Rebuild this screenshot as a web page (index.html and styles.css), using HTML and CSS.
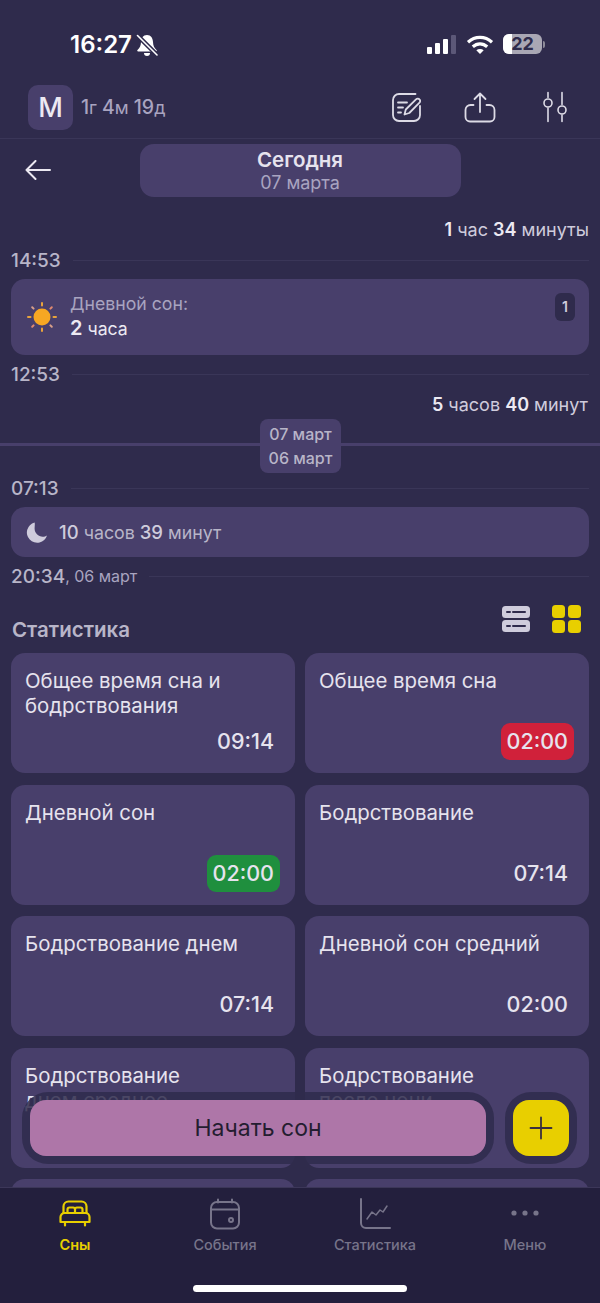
FILE: index.html
```html
<!DOCTYPE html>
<html lang="ru">
<head>
    <meta charset="UTF-8">
    <meta name="viewport" content="width=device-width, initial-scale=1.0">
    <title>Сны</title>
    <link rel="stylesheet" href="styles.css">
</head>
<body>
    <div class="screen">
        <div class="main">
            <div class="status-bar">
                <div class="status-left">
                    <span class="clock">16:27</span>
                    <svg class="bell" width="22" height="23" viewBox="0 0 22 23">
                        <path d="M11 1C7 1 5.300 4 5 8c-.2 3.500-1 5.500-3.500 8-.6.700-.2 1.500.7 1.500h17.600c.9 0 1.300-.8.700-1.500-2.500-2.500-3.300-4.500-3.500-8C16.700 4 15 1 11 1z" fill="#fff"/>
                        <path d="M8 19h6a3 3 0 0 1-6 0z" fill="#fff"/>
                        <path d="M1 1l20 20" stroke="#2f2b4c" stroke-width="4.500"/>
                        <path d="M1.500 1.500l19.500 19.500" stroke="#fff" stroke-width="1.600" stroke-linecap="round"/>
                    </svg>
                </div>
                <div class="status-right">
                    <div class="signal"><i class="s1"></i><i class="s2"></i><i class="s3"></i><i class="s4"></i></div>
                    <svg width="28" height="21" viewBox="0 0 28 21" fill="none" stroke="#fff" stroke-width="3.200">
                        <path d="M2 8.200c7-6.400 17-6.400 24 0"/>
                        <path d="M6.800 12.700c4.300-3.900 10.100-3.900 14.400 0"/>
                        <path d="M14 20l-3.700-3.800c2.200-1.700 5.200-1.700 7.400 0z" fill="#fff" stroke="none"/>
                    </svg>
                    <div class="battery"><span class="battery-fill"></span><span class="battery-num">22</span></div>
                    <span class="battery-cap"></span>
                </div>
            </div>

            <header class="top-bar">
                <div class="avatar">M</div>
                <div class="age"><b>1</b>г <b>4</b>м <b>19</b>д</div>
                <div class="top-icons">
                    <svg width="32" height="32" viewBox="0 0 32 32" fill="none" stroke="#dddbe6" stroke-width="1.800" stroke-linecap="round" stroke-linejoin="round">
                        <path d="M25.500 3H9a6 6 0 0 0-6 6v15a6 6 0 0 0 6 6h15a6 6 0 0 0 6-6v-9"/>
                        <path d="M8 11.500h9M8 16.500h5M8 21.500h3"/>
                        <path d="M14.500 23.500l1.300-5L26 8.300c1-1 2.600-1 3.500 0 .9.900.9 2.400 0 3.300L19.300 22z"/>
                    </svg>
                    <svg width="32" height="32" viewBox="0 0 32 32" fill="none" stroke="#dddbe6" stroke-width="1.800" stroke-linecap="round" stroke-linejoin="round">
                        <path d="M16 21V2.500M10.500 8L16 2.500 21.500 8"/>
                        <path d="M9.500 14H6.500a5 5 0 0 0-5 5v7a4.500 4.500 0 0 0 4.500 4.500h20a4.500 4.500 0 0 0 4.500-4.500v-7a5 5 0 0 0-5-5h-3"/>
                    </svg>
                    <svg width="26" height="32" viewBox="0 0 26 32" fill="none" stroke="#dddbe6" stroke-width="1.600" stroke-linecap="round">
                        <path d="M6 1.500v5M6 17v13.500M20 1.500v12M20 24v6.500"/>
                        <circle cx="6" cy="12" r="4"/>
                        <circle cx="20" cy="19" r="4"/>
                    </svg>
                </div>
            </header>

            <div class="date-nav">
                <svg class="back" width="26" height="20" viewBox="0 0 26 20" fill="none" stroke="#ece9f2" stroke-width="2" stroke-linecap="round" stroke-linejoin="round">
                    <path d="M25 10H1.500M10.500 1L1.500 10l9 9"/>
                </svg>
                <div class="date-pill">
                    <div class="date-title">Сегодня</div>
                    <div class="date-sub">07 марта</div>
                </div>
            </div>

            <div class="timeline">
                <div class="gap-label"><b>1</b> час <b>34</b> минуты</div>
                <div class="time-row first"><span class="time">14:53</span><span class="time-line"></span></div>
                <div class="day-card">
                    <svg width="32" height="32" viewBox="0 0 32 32">
                        <g fill="none" stroke-width="2" stroke-linecap="round">
                            <path d="M16 2v2.500M16 27.500V30" stroke="#e8a33d"/>
                            <path d="M2 16h2.500M27.500 16H30" stroke="#e8a33d"/>
                            <path d="M6.200 6.200l1.400 1.400M24.400 24.400l1.400 1.400" stroke="#d9a08a"/>
                            <path d="M6.200 25.800l1.400-1.400M24.400 7.600l1.400-1.400" stroke="#e08a70"/>
                        </g>
                        <circle cx="16" cy="16" r="8.500" fill="#f6a723"/>
                    </svg>
                    <div class="day-text">
                        <div class="day-title">Дневной сон:</div>
                        <div class="day-value"><b>2</b> часа</div>
                    </div>
                    <span class="count">1</span>
                </div>
                <div class="time-row"><span class="time">12:53</span><span class="time-line"></span></div>
                <div class="gap-label second"><b>5</b> часов <b>40</b> минут</div>

                <div class="day-split">
                    <div class="split-line"></div>
                    <div class="split-chip"><span>07 март</span><span>06 март</span></div>
                </div>

                <div class="time-row night-top"><span class="time">07:13</span><span class="time-line"></span></div>
                <div class="night-card">
                    <svg width="24" height="24" viewBox="0 0 24 24">
                        <path d="M9.500 2.500A10.300 10.300 0 1 0 22 15.500c-1.200.9-2.700 1.300-4.200 1.300-4.500 0-8.200-3.700-8.200-8.200 0-2.300.5-4.300 0-6.100z" fill="#cfccdc"/>
                    </svg>
                    <div class="night-text"><b>10</b> часов <b>39</b> минут</div>
                </div>
                <div class="time-row"><span class="time">20:34</span><span class="time-date">, 06 март</span><span class="time-line"></span></div>
            </div>

            <div class="stats-head">
                <h2>Статистика</h2>
                <div class="view-icons">
                    <svg width="30" height="28" viewBox="0 0 30 28">
                        <rect x="1" y="1" width="28" height="12" rx="3.500" fill="#cfccdc"/>
                        <rect x="1" y="15" width="28" height="12" rx="3.500" fill="#cfccdc"/>
                        <path d="M6 7h3M12 7h12M6 21h3M12 21h12" stroke="#2f2b4c" stroke-width="2" stroke-linecap="round"/>
                    </svg>
                    <svg width="29" height="28" viewBox="0 0 29 28" fill="#e8cf00">
                        <rect x="0" y="0" width="13" height="13" rx="3.500"/>
                        <rect x="16" y="0" width="13" height="13" rx="3.500"/>
                        <rect x="0" y="15" width="13" height="13" rx="3.500"/>
                        <rect x="16" y="15" width="13" height="13" rx="3.500"/>
                    </svg>
                </div>
            </div>

            <div class="stats-grid">
                <div class="stat"><div class="stat-name">Общее время сна и бодрствования</div><div class="stat-value">09:14</div></div>
                <div class="stat"><div class="stat-name">Общее время сна</div><div class="stat-value bad">02:00</div></div>
                <div class="stat"><div class="stat-name">Дневной сон</div><div class="stat-value good">02:00</div></div>
                <div class="stat"><div class="stat-name">Бодрствование</div><div class="stat-value">07:14</div></div>
                <div class="stat"><div class="stat-name">Бодрствование днем</div><div class="stat-value">07:14</div></div>
                <div class="stat"><div class="stat-name">Дневной сон средний</div><div class="stat-value">02:00</div></div>
                <div class="stat"><div class="stat-name">Бодрствование днем&nbsp;среднее</div></div>
                <div class="stat"><div class="stat-name">Бодрствование после&nbsp;ночи</div><div class="stat-value">07:14</div></div>
                <div class="stat"></div>
                <div class="stat"></div>
            </div>

            <div class="float-start"><button class="start-btn">Начать сон</button></div>
            <div class="float-add">
                <button class="add-btn">
                    <svg width="24" height="24" viewBox="0 0 24 24" stroke="#3a2f3f" stroke-width="1.800" stroke-linecap="round"><path d="M12 1.500v21M1.500 12h21"/></svg>
                </button>
            </div>
        </div>

        <nav class="tabs">
            <div class="tab active">
                <svg width="32" height="28" viewBox="0 0 32 28" fill="none" stroke="#e8cf00" stroke-width="2.200" stroke-linejoin="round" stroke-linecap="round">
                    <path d="M4.500 13V6.500a5 5 0 0 1 5-5h13a5 5 0 0 1 5 5V13"/>
                    <path d="M8.500 12.500V9.500a2 2 0 0 1 2-2h3.500a2 2 0 0 1 2 2v3M16 12.500V9.500a2 2 0 0 1 2-2h3.500a2 2 0 0 1 2 2v3"/>
                    <path d="M1.500 17a4 4 0 0 1 4-4h21a4 4 0 0 1 4 4v5h-29z"/>
                    <path d="M6 22v3.500M26 22v3.500"/>
                </svg>
                <span>Сны</span>
            </div>
            <div class="tab">
                <svg width="32" height="32" viewBox="0 0 32 32" fill="none" stroke="#77748a" stroke-width="2" stroke-linecap="round">
                    <rect x="2" y="4" width="28" height="26.500" rx="6"/>
                    <path d="M2 11.500h28M9 1.500v3M23 1.500v3"/>
                    <circle cx="22" cy="22" r="2"/>
                </svg>
                <span>События</span>
            </div>
            <div class="tab">
                <svg width="32" height="32" viewBox="0 0 32 32" fill="none" stroke="#77748a" stroke-width="2" stroke-linecap="round" stroke-linejoin="round">
                    <path d="M2 1v24a5 5 0 0 0 5 5h24"/>
                    <path d="M8 21l5-7 4 3 4-5 3 2 4-6" stroke-width="1.500"/>
                </svg>
                <span>Статистика</span>
            </div>
            <div class="tab">
                <svg width="32" height="32" viewBox="0 0 32 32" fill="#77748a">
                    <circle cx="5" cy="15" r="2.600"/><circle cx="16" cy="15" r="2.600"/><circle cx="27" cy="15" r="2.600"/>
                </svg>
                <span>Меню</span>
            </div>
            <div class="home-bar"></div>
        </nav>
    </div>
</body>
</html>
```

FILE: styles.css
```css
* {
    box-sizing: border-box;
}
html, body {
    margin: 0;
    height: 100%;
}
body {
    font-family: Inter, "Noto Sans", sans-serif;
    background: #2f2b4c;
    color: #ece9f2;
    overflow: hidden;
}
b {
    font-weight: 600;
}
.screen {
    width: 600px;
    height: 1303px;
    display: flex;
    flex-direction: column;
    overflow: hidden;
}
.main {
    position: relative;
    flex: 1;
    min-height: 0;
    overflow: hidden;
}

/* status bar */
.status-bar {
    height: 85px;
    display: flex;
    justify-content: space-between;
    align-items: flex-start;
    padding: 30px 55px 0 70px;
}
.status-left {
    display: flex;
    align-items: center;
    gap: 4px;
}
.clock {
    font-size: 24px;
    line-height: 30px;
    font-weight: 600;
    color: #fff;
}
.status-right {
    display: flex;
    align-items: center;
    height: 28px;
}
.signal {
    display: flex;
    align-items: flex-end;
    gap: 3px;
    height: 20px;
    margin-right: 10px;
}
.signal i {
    display: block;
    width: 5px;
    background: #fff;
    border-radius: 1px;
}
.s1 { height: 7px; }
.s2 { height: 11px; }
.s3 { height: 15px; }
.signal .s4 { height: 19px; background: #5c5878; }
.battery {
    position: relative;
    width: 39px;
    height: 20px;
    margin-left: 9px;
    background: #a9a7b4;
    border-radius: 6px;
    overflow: hidden;
}
.battery-fill {
    position: absolute;
    left: 0;
    top: 0;
    bottom: 0;
    width: 9px;
    background: #fff;
}
.battery-num {
    position: absolute;
    left: 0;
    right: 0;
    top: 0;
    text-align: center;
    font-size: 18px;
    line-height: 20px;
    font-weight: 700;
    color: #2f2b4c;
}
.battery-cap {
    width: 2px;
    height: 7px;
    margin-left: 1px;
    background: #8d8b99;
    border-radius: 0 2px 2px 0;
}

/* top bar */
.top-bar {
    height: 54px;
    display: flex;
    align-items: flex-start;
    padding-left: 28px;
    border-bottom: 1px solid #3a3658;
}
.avatar {
    width: 45px;
    height: 45px;
    border-radius: 10px;
    background: #483f6b;
    font-size: 27px;
    font-weight: 500;
    line-height: 45px;
    text-align: center;
    color: #ece9f2;
}
.age {
    margin-left: 8px;
    font-size: 18px;
    line-height: 45px;
    color: #a9a4c0;
}
.age b {
    font-size: 19.500px;
    font-weight: 500;
}
.top-icons {
    margin-left: auto;
    display: flex;
    align-items: center;
    height: 32px;
    margin-top: 6px;
    padding-right: 32px;
}
.top-icons svg:nth-child(1) { margin-right: 42px; }
.top-icons svg:nth-child(2) { margin-right: 46px; }

/* date nav */
.date-nav {
    position: relative;
    height: 59px;
    padding-top: 5px;
}
.back {
    position: absolute;
    left: 25px;
    top: 21px;
}
.date-pill {
    width: 321px;
    height: 53px;
    margin-left: 139.500px;
    border-radius: 14px;
    background: #483f6b;
    text-align: center;
    padding-top: 4px;
}
.date-title {
    font-size: 20.500px;
    line-height: 24px;
    font-weight: 600;
    color: #e6e3ee;
}
.date-sub {
    font-size: 18px;
    line-height: 21px;
    color: #a9a4c0;
}

/* timeline */
.timeline {
    padding: 0 11px;
}
.gap-label {
    margin-top: 21px;
    text-align: right;
    font-size: 18px;
    line-height: 22px;
    color: #cfccdc;
}
.gap-label b {
    color: #ece9f2;
}
.gap-label.second {
    margin-top: 10px;
    padding-right: 1px;
}
.time-row {
    display: flex;
    align-items: center;
    height: 20px;
    margin-top: 9px;
}
.time-row.first {
    margin-top: 9px;
    margin-bottom: 9px;
}
.time {
    font-size: 19px;
    font-weight: 500;
    color: #b8b5c8;
}
.time-date {
    font-size: 16px;
    color: #a9a4c0;
}
.time-line {
    flex: 1;
    height: 1px;
    margin-left: 12px;
    background: #3a3658;
}
.day-card {
    position: relative;
    height: 76px;
    display: flex;
    align-items: center;
    padding-left: 15px;
    border-radius: 14px;
    background: #483f6b;
}
.day-text {
    margin-left: 12px;
    padding-bottom: 2px;
}
.day-title {
    font-size: 17.700px;
    line-height: 24px;
    color: #a9a4c0;
}
.day-value {
    font-size: 17.700px;
    line-height: 24px;
    color: #ece9f2;
}
.day-value b {
    font-size: 20px;
}
.count {
    position: absolute;
    right: 14px;
    top: 14px;
    width: 20px;
    height: 28px;
    border-radius: 6px;
    background: #2f2b4c;
    font-size: 14px;
    font-weight: 600;
    line-height: 28px;
    text-align: center;
    color: #cfccdc;
}
.day-split {
    position: relative;
    height: 54px;
    margin: 3px -11px 0;
}
.split-line {
    position: absolute;
    left: 0;
    right: 0;
    top: 24px;
    height: 3px;
    background: #483f6b;
}
.split-chip {
    position: absolute;
    left: 260px;
    top: 0;
    width: 81px;
    height: 54px;
    display: flex;
    flex-direction: column;
    justify-content: center;
    align-items: center;
    gap: 3px;
    border-radius: 8px;
    background: #483f6b;
    font-size: 16px;
    line-height: 21px;
    font-weight: 500;
    color: #b8b5c8;
}
.time-row.night-top {
    margin-top: 5px;
    margin-bottom: 9px;
}
.night-card {
    height: 50px;
    display: flex;
    align-items: center;
    gap: 10px;
    padding-left: 14px;
    border-radius: 14px;
    background: #483f6b;
    font-size: 17.800px;
    color: #b8b5c8;
}
.night-text b {
    font-size: 18.500px;
    font-weight: 500;
    color: #cfccdc;
}

/* stats */
.stats-head {
    display: flex;
    justify-content: space-between;
    align-items: flex-start;
    height: 67px;
    padding: 19px 19px 0 12px;
}
.stats-head h2 {
    margin: 10px 0 0;
    font-size: 20.500px;
    line-height: 30px;
    font-weight: 600;
    color: #b8b5c8;
}
.view-icons {
    display: flex;
    gap: 21px;
}
.stats-grid {
    display: grid;
    grid-template-columns: 1fr 1fr;
    grid-auto-rows: 120px;
    gap: 11.500px 10px;
    padding: 0 11px;
}
.stat {
    position: relative;
    padding: 15px 14px;
    border-radius: 14px;
    background: #483f6b;
}
.stat-name {
    font-size: 20.400px;
    line-height: 25px;
    color: #e6e3ee;
}
.stat-value {
    position: absolute;
    right: 15px;
    bottom: 13px;
    padding: 0 6px;
    font-size: 21.500px;
    line-height: 37px;
    font-weight: 500;
    border-radius: 9px;
    color: #e6e3ee;
}
.stat-value.bad {
    background: #d0213a;
}
.stat-value.good {
    background: #1f8f3e;
}

/* floating buttons */
.float-start,
.float-add {
    position: absolute;
    top: 1092px;
    height: 72px;
    padding: 8px;
    border-radius: 26px;
    background: rgba(47, 43, 76, 0.85);
}
.float-start {
    left: 22px;
    width: 472px;
}
.float-add {
    left: 505px;
    width: 72px;
}
.start-btn,
.add-btn {
    display: block;
    width: 100%;
    height: 56px;
    padding: 0;
    border: none;
    border-radius: 16px;
    font-family: inherit;
}
.start-btn {
    background: #ae76a8;
    color: #241d30;
    font-size: 23px;
}
.add-btn {
    display: flex;
    align-items: center;
    justify-content: center;
    background: #e8cf00;
}

/* bottom tabs */
.tabs {
    position: relative;
    flex: none;
    height: 116px;
    display: flex;
    background: #231f3d;
    border-top: 1px solid #3c3759;
}
.tab {
    width: 150px;
    display: flex;
    flex-direction: column;
    align-items: center;
    padding-top: 10px;
    color: #77748a;
    font-size: 14.500px;
    font-weight: 500;
}
.tab svg {
    height: 32px;
    flex: none;
}
.tab span {
    margin-top: 5px;
    line-height: 20px;
}
.tab.active {
    color: #e8cf00;
    font-weight: 600;
}
.home-bar {
    position: absolute;
    left: 193px;
    bottom: 11px;
    width: 214px;
    height: 7px;
    border-radius: 4px;
    background: #fff;
}
```
